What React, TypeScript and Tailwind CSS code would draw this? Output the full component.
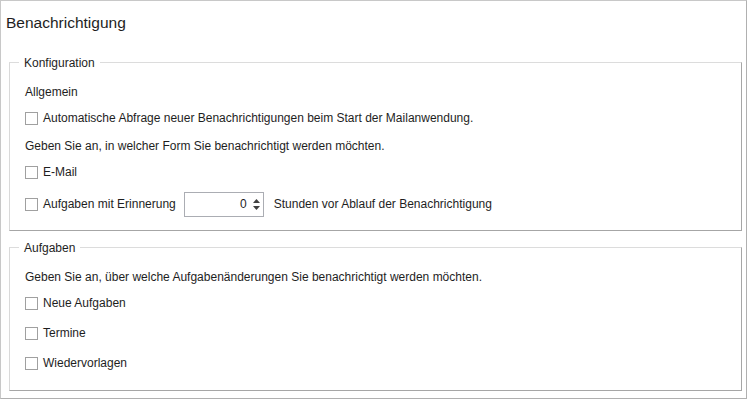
import React from 'react';

const font = { fontFamily: '"Segoe UI", "Liberation Sans", Arial, sans-serif' };

function Check({ label }: { label: string }) {
  return (
    <label className="flex h-[20px] items-center">
      <span className="h-[13px] w-[13px] shrink-0 border border-[#a0a0a0] bg-white" />
      <span className="ml-[5px] text-[12px] text-[#1e1e1e]">{label}</span>
    </label>
  );
}

function Group({ title, className, children }: { title: string; className: string; children: React.ReactNode }) {
  return (
    <div
      className={`relative ml-[8px] mr-[4px] border border-l-[#d9d9d9] border-t-[#dcdcdc] border-r-[#a6a6a6] border-b-[#a6a6a6] pl-[15px] ${className}`}
    >
      {/* legend sits over the top border */}
      <span className="absolute left-[9px] top-[-9px] bg-white px-[5px] text-[12px] leading-[18px] text-[#1e1e1e]">
        {title}
      </span>
      {children}
    </div>
  );
}

export default function App() {
  return (
    <div
      style={font}
      className="h-[399px] w-[747px] border border-[#c8c8c8] border-r-[#b0b0b0] border-b-[#b0b0b0] bg-white text-[#1e1e1e]"
    >
      <div className="flex h-[61px] items-start pl-[5px] pt-[11px] text-[15.5px] leading-[22px]">
        Benachrichtigung
      </div>

      <Group title="Konfiguration" className="h-[169px] pt-[19px]">
        <div className="flex h-[20px] items-center text-[12px]">Allgemein</div>
        <div className="mt-[6px]">
          <Check label="Automatische Abfrage neuer Benachrichtigungen beim Start der Mailanwendung." />
        </div>
        <div className="mt-[8px] flex h-[20px] items-center text-[12px]">
          Geben Sie an, in welcher Form Sie benachrichtigt werden möchten.
        </div>
        <div className="mt-[6px]">
          <Check label="E-Mail" />
        </div>
        <div className="mt-[9px] flex h-[26px] items-center">
          <Check label="Aufgaben mit Erinnerung" />
          <div className="ml-[8px] flex h-[25px] w-[80px] items-center justify-end border border-[#abadb3] bg-white pr-[3px] text-[12px]">
            <span className="mr-[6px]">0</span>
            <span className="flex flex-col items-center gap-[3px]">
              <svg width="7" height="4" viewBox="0 0 7 4">
                <path d="M0 4 L3.5 0 L7 4 Z" fill="#404040" />
              </svg>
              <svg width="7" height="4" viewBox="0 0 7 4">
                <path d="M0 0 L3.5 4 L7 0 Z" fill="#404040" />
              </svg>
            </span>
          </div>
          <span className="ml-[10px] text-[12px]">Stunden vor Ablauf der Benachrichtigung</span>
        </div>
      </Group>

      <Group title="Aufgaben" className="mt-[16px] h-[144px] pt-[19px]">
        <div className="flex h-[20px] items-center text-[12px]">
          Geben Sie an, über welche Aufgabenänderungen Sie benachrichtigt werden möchten.
        </div>
        <div className="mt-[6px]">
          <Check label="Neue Aufgaben" />
        </div>
        <div className="mt-[10px]">
          <Check label="Termine" />
        </div>
        <div className="mt-[10px]">
          <Check label="Wiedervorlagen" />
        </div>
      </Group>
    </div>
  );
}
